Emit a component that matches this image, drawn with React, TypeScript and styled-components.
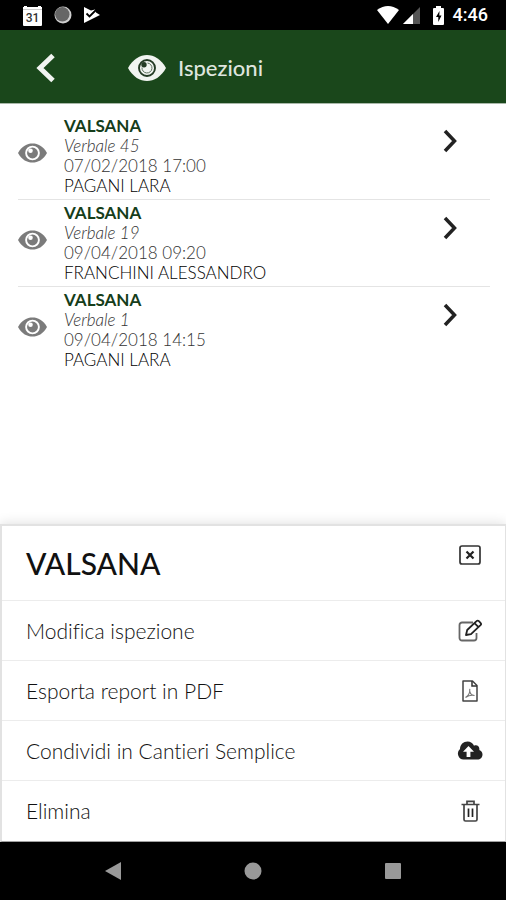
import React from "react";
import styled, { createGlobalStyle } from "styled-components";

const GlobalStyle = createGlobalStyle`
  * { box-sizing: border-box; }
  body { margin: 0; background: #ffffff; font-family: "Lato", sans-serif; font-variant-ligatures: none; }
  button { font: inherit; color: inherit; border: 0; background: none; padding: 0; cursor: pointer; font-variant-ligatures: none; }
  svg { display: block; flex: none; }
`;

const Screen = styled.div`
  display: flex;
  flex-direction: column;
  min-height: 100vh;
  background: #ffffff;
`;

const StatusBar = styled.div`
  display: flex;
  align-items: center;
  justify-content: space-between;
  height: 30px;
  padding: 0 18px 0 22px;
  background: #000000;
  color: #ffffff;
`;

const StatusGroup = styled.div<{ $gap: number }>`
  display: flex;
  align-items: center;
  gap: ${(p) => p.$gap}px;
`;

const Battery = styled.span`
  margin: 0 5px 0 9px;
`;

const Clock = styled.time`
  font: 500 18px/24px "Roboto", sans-serif;
`;

const Header = styled.header`
  display: flex;
  align-items: center;
  height: 74px;
  padding: 2px 36px 0;
  background: #1a471b;
  border-bottom: 1px solid #a9b8a9;
`;

const BackButton = styled.button`
  display: flex;
  margin-right: 72px;
`;

const HeaderTitle = styled.h1`
  margin: 0 0 0 12px;
  font-size: 22px;
  line-height: 28px;
  font-weight: 500;
  color: #dfe5df;
`;

const InspectionList = styled.ul`
  flex: 1;
  margin: 0;
  padding: 9px 16px 0 18px;
  list-style: none;
`;

const InspectionRow = styled.li`
  border-bottom: 1px solid #e4e4e4;
  &:last-child { border-bottom: 0; }
`;

const InspectionButton = styled.button`
  display: flex;
  align-items: center;
  width: 100%;
  padding: 3px 33px 3px 0;
  text-align: left;
`;

const EyeSlot = styled.span`
  padding-bottom: 6px;
`;

const Details = styled.span`
  display: flex;
  flex: 1;
  flex-direction: column;
  margin-left: 17px;
  font-size: 17px;
  line-height: 20px;
`;

const Site = styled.strong`
  font-weight: 700;
  color: #153d1a;
`;

const Report = styled.em`
  font-weight: 300;
  color: #333333;
`;

const Detail = styled.span<{ $color: string }>`
  font-weight: 300;
  color: ${(p) => p.$color};
`;

const Chevron = styled.span`
  align-self: flex-start;
  padding-top: 13px;
`;

const Sheet = styled.section`
  border: 2px solid #e2e2e2;
  border-right-width: 1px;
  border-bottom: 1px solid #a0a0a0;
  background: #ffffff;
  box-shadow: 0 0 12px rgba(0, 0, 0, 0.14);
`;

const SheetHeader = styled.div`
  display: flex;
  align-items: flex-start;
  justify-content: space-between;
  height: 75px;
  padding: 19px 24px 0 24px;
  border-bottom: 1px solid #ececec;
`;

const SheetTitle = styled.h2`
  margin: 0;
  font-size: 30px;
  line-height: 36px;
  font-weight: 500;
  color: #111111;
`;

const ActionButton = styled.button`
  display: flex;
  align-items: center;
  justify-content: space-between;
  width: 100%;
  height: 60px;
  padding: 0 21px 0 24px;
  border-bottom: 1px solid #ececec;
  font-size: 21px;
  line-height: 28px;
  font-weight: 300;
  color: #111111;
  text-align: left;
  &:last-child { border-bottom: 0; }
`;

const IconSlot = styled.span`
  display: flex;
  justify-content: center;
  width: 28px;
`;

const NavBar = styled.nav`
  display: flex;
  align-items: center;
  justify-content: space-around;
  height: 58px;
  padding: 0 43px;
  background: #000000;
`;

const NavButton = styled.button`
  display: flex;
  justify-content: center;
  width: 48px;
`;

const CalendarIcon = () => (
  <svg width="21" height="21" viewBox="0 0 21 21" aria-hidden="true">
    <path d="M2 1h3v1h11V1h3v1h1v18a1 1 0 0 1-1 1H2a1 1 0 0 1-1-1V2h1z" fill="#fff" />
    <path d="M1 4.500h19" stroke="#ccc" strokeWidth="1" />
    <text x="10.500" y="16.500" textAnchor="middle" fontFamily="Roboto" fontWeight="500" fontSize="12" fill="#333">31</text>
  </svg>
);

const RecordIcon = () => (
  <svg width="18" height="18" viewBox="0 0 18 18" aria-hidden="true">
    <circle cx="9" cy="9" r="8.500" fill="#d0d0d0" />
    <circle cx="8.300" cy="8.300" r="7.200" fill="#666" />
  </svg>
);

const PlayCheckIcon = () => (
  <svg width="17" height="18" viewBox="0 0 17 18" aria-hidden="true">
    <path d="M1 1l7 3.500 4-1 1 3 4 2.500L1 17z" fill="#fff" />
    <path d="M3.500 7.500l3 3L13 4" fill="none" stroke="#000" strokeWidth="1.800" />
  </svg>
);

const WifiIcon = () => (
  <svg width="22" height="18" viewBox="0 0 22 18" aria-hidden="true">
    <path d="M0 4Q11-4 22 4L11 18z" fill="#fff" />
  </svg>
);

const SignalIcon = () => (
  <svg width="17" height="17" viewBox="0 0 17 17" aria-hidden="true">
    <path d="M17 0v17H0z" fill="#555" />
    <path d="M10 7v10H0z" fill="#fff" />
  </svg>
);

const BatteryIcon = () => (
  <svg width="11" height="19" viewBox="0 0 11 19" aria-hidden="true">
    <path d="M3 0h5v2h2a1 1 0 0 1 1 1v15a1 1 0 0 1-1 1H1a1 1 0 0 1-1-1V3a1 1 0 0 1 1-1h2z" fill="#fff" />
    <path d="M6.500 5L3 11h2.300v5L8.500 9.500H6.300z" fill="#000" />
  </svg>
);

const BackIcon = () => (
  <svg width="20" height="30" viewBox="0 0 20 30" aria-hidden="true">
    <path d="M17 2.500L4 15l13 12.500" fill="none" stroke="#f1f4f1" strokeWidth="5" />
  </svg>
);

const HeaderEye = () => (
  <svg width="38" height="26" viewBox="0 0 38 26" aria-hidden="true">
    <path d="M0 13C5 4 12 0 19 0s14 4 19 13c-5 9-12 13-19 13S5 22 0 13z" fill="#f1f4f1" />
    <circle cx="19" cy="13" r="8" fill="none" stroke="#243b25" strokeWidth="1.900" />
    <circle cx="16" cy="9.800" r="2.700" fill="#243b25" />
    <path d="M14 12.500a5 5 0 1 0 5.500-4.500" fill="none" stroke="#5d705e" strokeWidth="1" />
  </svg>
);

const RowEye = () => (
  <svg width="29" height="20" viewBox="0 0 29 20" aria-hidden="true">
    <path d="M0 10C4 3 9 .5 14.500 .5S25 3 29 10c-4 7-9 9.500-14.500 9.500S4 17 0 10z" fill="#7b7b7b" />
    <circle cx="14.500" cy="10" r="6.400" fill="none" stroke="#fff" strokeWidth="1.900" />
    <circle cx="12.500" cy="7.800" r="2.300" fill="#fff" />
  </svg>
);

const ChevronIcon = () => (
  <svg width="14" height="24" viewBox="0 0 14 24" aria-hidden="true">
    <path d="M2 2l9.500 10L2 22" fill="none" stroke="#222" strokeWidth="3.500" />
  </svg>
);

const CloseIcon = () => (
  <svg width="22" height="20" viewBox="0 0 22 20" aria-hidden="true">
    <rect x="1" y="1" width="20" height="18" rx="2" fill="none" stroke="#333" strokeWidth="1.700" />
    <path d="M7.500 6.500l7 7m0-7l-7 7" stroke="#222" strokeWidth="2.200" />
  </svg>
);

const EditIcon = () => (
  <svg width="25" height="23" viewBox="0 0 25 23" aria-hidden="true">
    <path d="M15 3.500H4A2.500 2.500 0 0 0 1.500 6v13A2.500 2.500 0 0 0 4 21.500h12a2.500 2.500 0 0 0 2.500-2.500v-5" fill="none" stroke="#666" strokeWidth="1.800" />
    <path d="M8 16l1.200-5L18.500 2.200a1.700 1.700 0 0 1 2.400 0l1.600 1.600a1.700 1.700 0 0 1 0 2.400L13 15.200zM16.500 4.200l4 4" fill="#fff" stroke="#222" strokeWidth="1.800" strokeLinejoin="round" />
  </svg>
);

const PdfIcon = () => (
  <svg width="16" height="22" viewBox="0 0 16 22" aria-hidden="true">
    <path d="M1 1h9.500L15 5.500V21H1z" fill="none" stroke="#444" strokeWidth="1.500" strokeLinejoin="round" />
    <path d="M10 1v5h5" fill="none" stroke="#333" strokeWidth="1.500" />
    <path d="M3.500 17.500c2.500-1.500 4.500-5 4.300-8.500-.9 3.500 1.500 6.500 4.700 6.500-3-.8-6 0-9 2z" fill="none" stroke="#777" strokeWidth="1.100" />
  </svg>
);

const CloudIcon = () => (
  <svg width="26" height="19" viewBox="0 0 26 19" aria-hidden="true">
    <path d="M6.500 18.500A6 6 0 0 1 3 8C3 3.500 6.500.5 10.500.5c3 0 5.500 1.800 6.500 4.200 3-1.600 6 .8 5.300 4.300 2 .6 3.200 2.300 3.200 4.500 0 3-2.300 5-5 5z" fill="#222" />
    <path d="M11.500 5L6 10.700h3.600V16h3.800v-5.300H17z" fill="#fff" />
  </svg>
);

const TrashIcon = () => (
  <svg width="19" height="22" viewBox="0 0 19 22" aria-hidden="true">
    <path d="M.5 4.500h18M6 4V1.300h7V4M3 5v14.500A1.500 1.500 0 0 0 4.500 21h10a1.500 1.500 0 0 0 1.500-1.500V5" fill="none" stroke="#444" strokeWidth="1.700" />
    <path d="M7.500 8.500v8.500m4-8.500v8.500" stroke="#222" strokeWidth="1.700" />
  </svg>
);

const inspections = [
  { report: "Verbale 45", date: "07/02/2018 17:00", person: "PAGANI LARA" },
  { report: "Verbale 19", date: "09/04/2018 09:20", person: "FRANCHINI ALESSANDRO" },
  { report: "Verbale 1", date: "09/04/2018 14:15", person: "PAGANI LARA" },
];

const actions = [
  { label: "Modifica ispezione", Icon: EditIcon },
  { label: "Esporta report in PDF", Icon: PdfIcon },
  { label: "Condividi in Cantieri Semplice", Icon: CloudIcon },
  { label: "Elimina", Icon: TrashIcon },
];

export default function App() {
  return (
    <Screen>
      <GlobalStyle />
      <StatusBar>
        <StatusGroup $gap={11}>
          <CalendarIcon />
          <RecordIcon />
          <PlayCheckIcon />
        </StatusGroup>
        <StatusGroup $gap={4}>
          <WifiIcon />
          <SignalIcon />
          <Battery>
            <BatteryIcon />
          </Battery>
          <Clock>4:46</Clock>
        </StatusGroup>
      </StatusBar>
      <Header>
        <BackButton aria-label="Indietro">
          <BackIcon />
        </BackButton>
        <HeaderEye />
        <HeaderTitle>Ispezioni</HeaderTitle>
      </Header>
      <InspectionList>
        {inspections.map((item) => (
          <InspectionRow key={item.report}>
            <InspectionButton>
              <EyeSlot>
                <RowEye />
              </EyeSlot>
              <Details>
                <Site>VALSANA</Site>
                <Report>{item.report}</Report>
                <Detail $color="#333333">{item.date}</Detail>
                <Detail $color="#000000">{item.person}</Detail>
              </Details>
              <Chevron>
                <ChevronIcon />
              </Chevron>
            </InspectionButton>
          </InspectionRow>
        ))}
      </InspectionList>
      <Sheet aria-labelledby="sheet-title">
        <SheetHeader>
          <SheetTitle id="sheet-title">VALSANA</SheetTitle>
          <button aria-label="Chiudi">
            <CloseIcon />
          </button>
        </SheetHeader>
        {actions.map(({ label, Icon }) => (
          <ActionButton key={label}>
            {label}
            <IconSlot>
              <Icon />
            </IconSlot>
          </ActionButton>
        ))}
      </Sheet>
      <NavBar>
        <NavButton aria-label="Back">
          <svg width="16" height="18" viewBox="0 0 16 18" aria-hidden="true">
            <path d="M16 0v18L0 9z" fill="#999" />
          </svg>
        </NavButton>
        <NavButton aria-label="Home">
          <svg width="18" height="18" viewBox="0 0 18 18" aria-hidden="true">
            <circle cx="9" cy="9" r="8.500" fill="#999" />
          </svg>
        </NavButton>
        <NavButton aria-label="Recenti">
          <svg width="16" height="16" viewBox="0 0 16 16" aria-hidden="true">
            <rect width="16" height="16" rx="1" fill="#999" />
          </svg>
        </NavButton>
      </NavBar>
    </Screen>
  );
}
